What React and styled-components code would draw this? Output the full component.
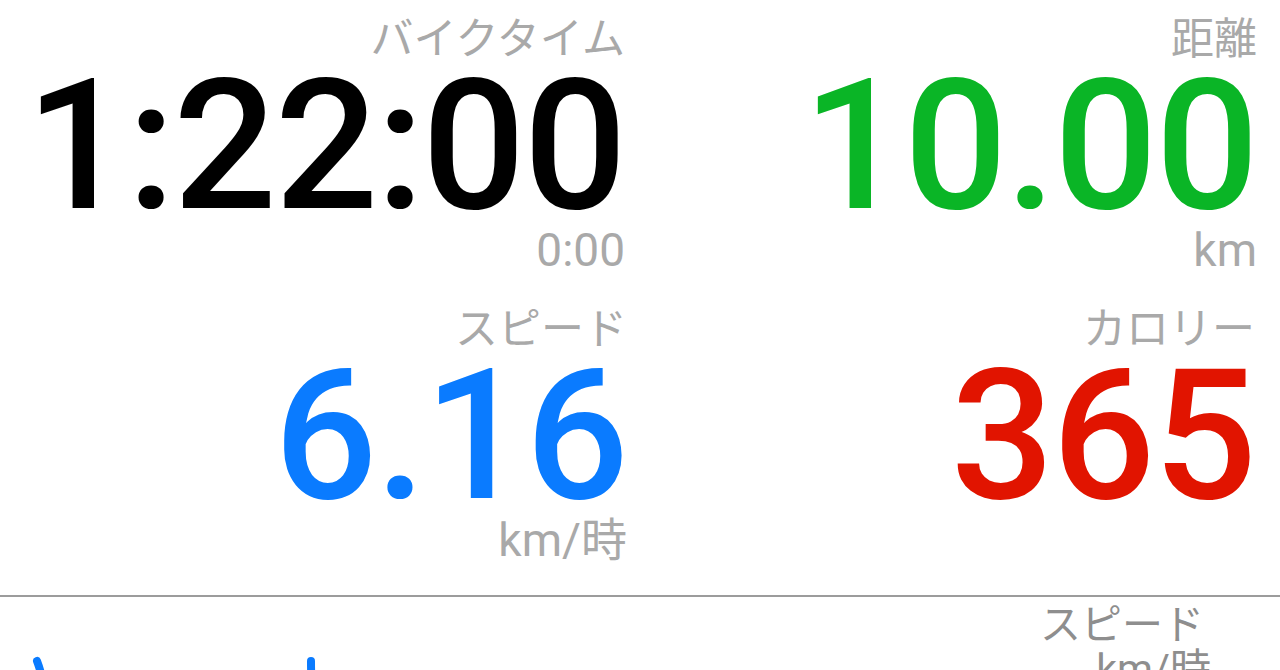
import React from "react";
import styled, { createGlobalStyle } from "styled-components";

const GlobalStyle = createGlobalStyle`
  html, body {
    margin: 0;
    padding: 0;
    background: #ffffff;
  }
  body {
    font-family: Roboto, "Noto Sans CJK JP", sans-serif;
    overflow: hidden;
  }
`;

const Screen = styled.div`
  width: 1280px;
  height: 670px;
  overflow: hidden;
  background: #fff;
`;

const StatsGrid = styled.div`
  display: grid;
  grid-template-columns: 640px 640px;
  grid-auto-rows: 290px;
  padding-top: 15px;
  height: 595px;
  box-sizing: border-box;
`;

const Stat = styled.div`
  display: flex;
  flex-direction: column;
  align-items: flex-end;
  padding-right: ${(props) => props.right || 15}px;
`;

const Label = styled.div`
  font-size: 43px;
  line-height: 48px;
  color: #a9a9a9;
  font-family: Roboto, "Noto Sans CJK JP", sans-serif;
`;

const Value = styled.div`
  font-size: 182px;
  font-weight: 500;
  line-height: 148px;
  margin-top: 9px;
  letter-spacing: -2px;
  color: ${(props) => props.color || "#000"};
  font-family: Roboto, sans-serif;
`;

const Unit = styled.div`
  font-size: 46px;
  line-height: 52px;
  margin-top: 4px;
  color: #a9a9a9;
  font-family: Roboto, "Noto Sans CJK JP", sans-serif;
`;

const Divider = styled.hr`
  margin: 0;
  border: none;
  height: 2px;
  background: #9c9c9c;
`;

const ChartSection = styled.div`
  display: flex;
  height: 73px;
`;

const ChartArea = styled.div`
  flex: 1;

  > svg {
    display: block;
  }
`;

const Axis = styled.div`
  display: flex;
  flex-direction: column;
  align-items: flex-end;
  padding: 6px 76px 0 0;
  color: #8e8e8e;
`;

const AxisLabel = styled.div`
  font-size: 41px;
  line-height: 44px;
  font-family: Roboto, "Noto Sans CJK JP", sans-serif;
`;

const AxisUnit = styled.div`
  font-size: 41px;
  line-height: 44px;
  margin-right: -7px;
  font-family: Roboto, "Noto Sans CJK JP", sans-serif;
`;

const stats = [
  { label: "バイクタイム", value: "1:22:00", unit: "0:00", color: "#000000", right: 15 },
  { label: "距離", value: "10.00", unit: "km", color: "#0ab526", right: 23 },
  { label: "スピード", value: "6.16", unit: "km/時", color: "#0a7bff", right: 13 },
  { label: "カロリー", value: "365", unit: "", color: "#e11400", right: 25 },
];

const SpeedChart = () => (
  <svg width="1000" height="73" viewBox="0 0 1000 73">
    <path
      d="M37 64 C40 72 42 78 44 90"
      fill="none"
      stroke="#0a7bff"
      strokeWidth="8"
      strokeLinecap="round"
    />
    <path
      d="M311 64 C311 72 311 78 312 90"
      fill="none"
      stroke="#0a7bff"
      strokeWidth="8"
      strokeLinecap="round"
    />
  </svg>
);

export default function App() {
  return (
    <Screen>
      <GlobalStyle />
      <StatsGrid>
        {stats.map((s) => (
          <Stat key={s.label} right={s.right}>
            <Label>{s.label}</Label>
            <Value color={s.color}>{s.value}</Value>
            <Unit>{s.unit}</Unit>
          </Stat>
        ))}
      </StatsGrid>
      <Divider />
      <ChartSection>
        <ChartArea>
          <SpeedChart />
        </ChartArea>
        <Axis>
          <AxisLabel>スピード</AxisLabel>
          <AxisUnit>km/時</AxisUnit>
        </Axis>
      </ChartSection>
    </Screen>
  );
}
